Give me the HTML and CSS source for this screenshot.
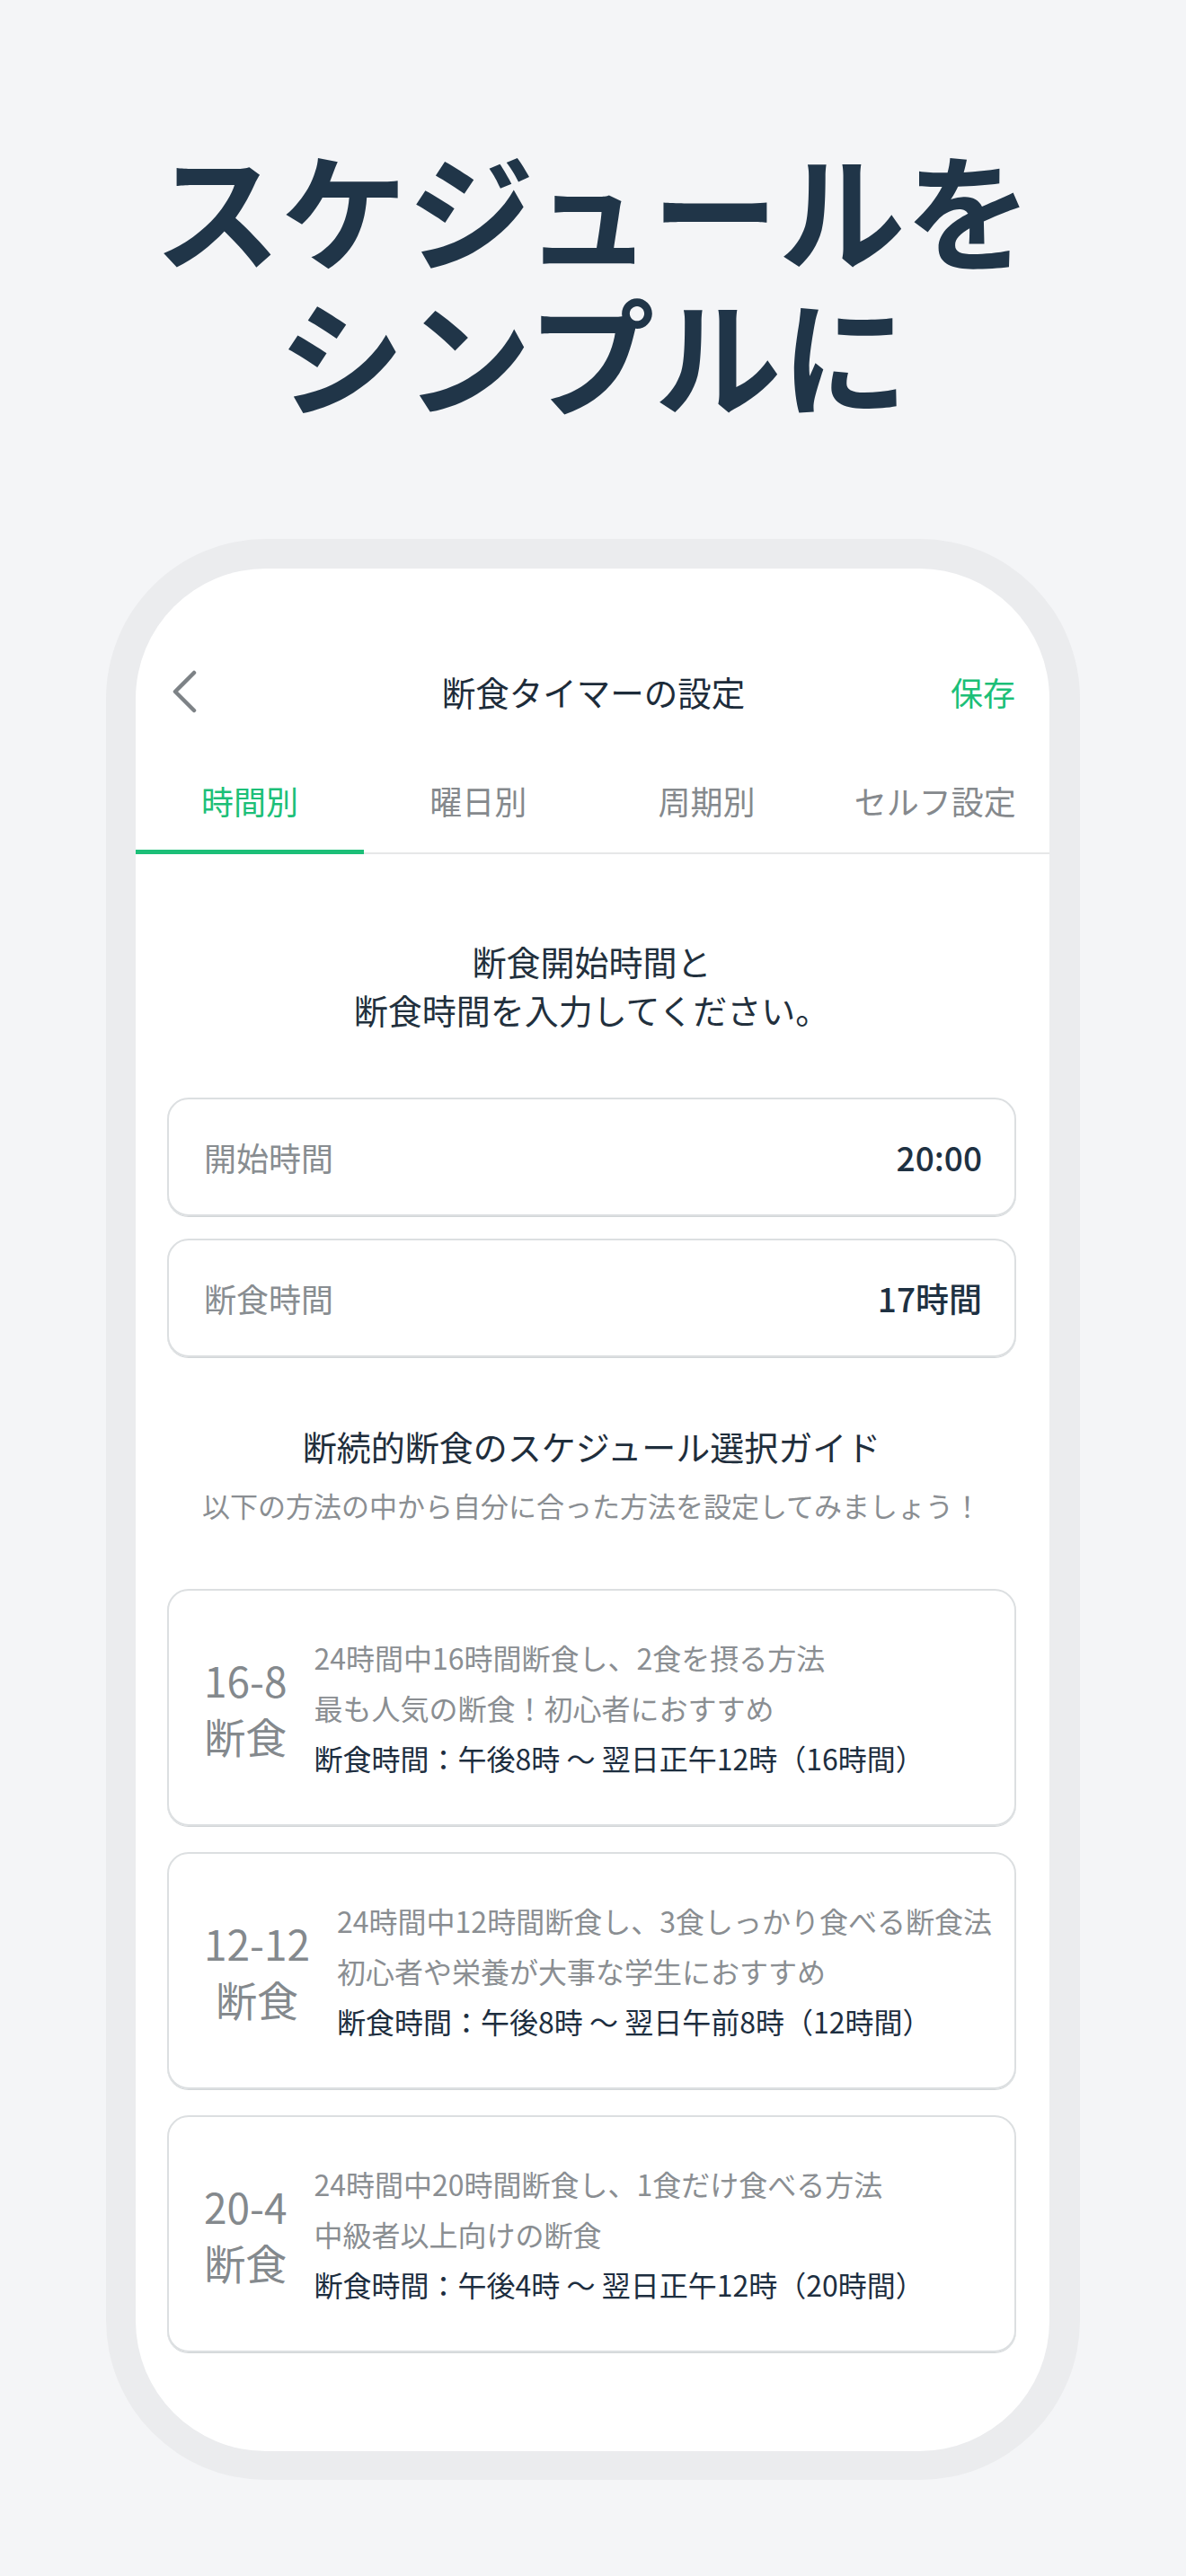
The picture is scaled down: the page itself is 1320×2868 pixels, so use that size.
FILE: index.html
```html
<!DOCTYPE html>
<html lang="ja">
<head>
<meta charset="utf-8">
<title>スケジュールをシンプルに</title>
<link rel="stylesheet" href="styles.css">
</head>
<body>
<main class="page">
  <h1 class="hero"><span class="hero-line">スケジュールを</span><span class="hero-line">シンプルに</span></h1>

  <div class="phone">
    <div class="screen">
      <header class="nav">
        <span class="nav-back">
          <svg width="28" height="48" viewBox="0 0 28 48" aria-hidden="true"><path d="M25 3 L4 24 L25 45" fill="none" stroke="#7d8286" stroke-width="4.5" stroke-linecap="round" stroke-linejoin="round"/></svg>
        </span>
        <span class="nav-title">断食タイマーの設定</span>
        <span class="nav-save">保存</span>
      </header>

      <nav class="tabs">
        <span class="tab tab-active">時間別</span>
        <span class="tab">曜日別</span>
        <span class="tab">周期別</span>
        <span class="tab">セルフ設定</span>
      </nav>

      <section class="content">
        <p class="intro">断食開始時間と<br>断食時間を入力してください。</p>

        <div class="field">
          <span class="field-label">開始時間</span>
          <span class="field-value">20:00</span>
        </div>
        <div class="field field-second">
          <span class="field-label">断食時間</span>
          <span class="field-value">17時間</span>
        </div>

        <h2 class="guide-title">断続的断食のスケジュール選択ガイド</h2>
        <p class="guide-sub">以下の方法の中から自分に合った方法を設定してみましょう！</p>

        <div class="cards">
          <div class="card">
            <div class="card-label">16-8<br>断食</div>
            <div class="card-text">
              <p class="muted">24時間中16時間断食し、2食を摂る方法</p>
              <p class="muted">最も人気の断食！初心者におすすめ</p>
              <p class="strong">断食時間：午後8時 〜 翌日正午12時（16時間）</p>
            </div>
          </div>
          <div class="card">
            <div class="card-label">12-12<br>断食</div>
            <div class="card-text">
              <p class="muted">24時間中12時間断食し、3食しっかり食べる断食法</p>
              <p class="muted">初心者や栄養が大事な学生におすすめ</p>
              <p class="strong">断食時間：午後8時 〜 翌日午前8時（12時間）</p>
            </div>
          </div>
          <div class="card">
            <div class="card-label">20-4<br>断食</div>
            <div class="card-text">
              <p class="muted">24時間中20時間断食し、1食だけ食べる方法</p>
              <p class="muted">中級者以上向けの断食</p>
              <p class="strong">断食時間：午後4時 〜 翌日正午12時（20時間）</p>
            </div>
          </div>
        </div>
      </section>
    </div>
  </div>
</main>
</body>
</html>
```

FILE: styles.css
```css
* { box-sizing: border-box; }

html, body {
  margin: 0;
  padding: 0;
}

body {
  background: #f4f5f7;
  font-family: "Noto Sans CJK JP", "Noto Sans", sans-serif;
  color: #21303e;
}

.page {
  width: 1320px;
  height: 2868px;
  padding-top: 149px;
}

.hero {
  margin: 0;
  text-align: center;
  font-size: 141px;
  font-weight: 700;
  color: #203548;
  letter-spacing: 0;
}

.hero-line {
  display: block;
  height: 162px;
  line-height: 162px;
}

.phone {
  width: 1084px;
  margin: 127px auto 0;
  padding: 33px 34px 32px 33px;
  background: #ebecee;
  border-radius: 178px;
}

.screen {
  height: 2096px;
  background: #ffffff;
  border-radius: 145px;
  overflow: hidden;
}

/* nav */
.nav {
  display: grid;
  grid-template-columns: 1fr auto 1fr;
  align-items: center;
  height: 96px;
  margin-top: 89px;
  padding: 0 38px 0 40px;
}

.nav-back {
  display: flex;
  align-items: center;
}

.nav-back svg { display: block; }

.nav-title {
  font-size: 37.5px;
  line-height: 48px;
  color: #1d2c3a;
}

.nav-save {
  justify-self: end;
  font-size: 36px;
  line-height: 48px;
  color: #1cbf78;
}

/* tabs */
.tabs {
  display: grid;
  grid-template-columns: repeat(4, 1fr);
  border-bottom: 2px solid #e6e7e8;
}

.tab {
  text-align: center;
  font-size: 36px;
  line-height: 36px;
  color: #85898d;
  padding: 55px 0 38px;
}

.tab-active {
  color: #1cbf78;
  border-bottom: 5px solid #1cbf78;
  margin-bottom: -2px;
  padding-bottom: 37px;
}

/* content */
.content {
  padding: 0 37px 0 35px;
}

.intro {
  margin: 92px 0 0;
  text-align: center;
  font-size: 38px;
  line-height: 54px;
  color: #22303d;
}

.field {
  display: flex;
  align-items: center;
  justify-content: space-between;
  height: 132px;
  margin-top: 71px;
  padding: 0 36px 0 39px;
  border: 2px solid #dcdfe1;
  border-radius: 24px;
  box-shadow: 0 1px 0 #d2d6d8;
}

.field-second { margin-top: 25px; }

.field-label {
  font-size: 36px;
  color: #888d91;
}

.field-value {
  font-size: 37px;
  font-weight: 500;
  color: #1e3142;
}

.guide-title {
  margin: 74px 0 0;
  text-align: center;
  font-size: 38px;
  line-height: 50px;
  font-weight: 400;
  color: #1f2e3c;
}

.guide-sub {
  margin: 19px 0 0;
  text-align: center;
  font-size: 31px;
  line-height: 44px;
  color: #8a8e92;
}

.cards {
  display: flex;
  flex-direction: column;
  gap: 29px;
  margin-top: 71px;
}

.card {
  display: flex;
  align-items: center;
  gap: 30px;
  height: 264px;
  padding: 0 12px 0 39px;
  border: 2px solid #dcdfe1;
  border-radius: 24px;
  box-shadow: 0 1px 0 #d2d6d8;
}

.card-label {
  text-align: center;
  font-size: 46px;
  line-height: 62px;
  color: #84898d;
  white-space: nowrap;
}

.card-text p {
  margin: 0;
  font-size: 32px;
  line-height: 56px;
  white-space: nowrap;
}

.card-text .muted { color: #8a8e92; }
.card-text .strong { color: #1d2e3f; }
```
